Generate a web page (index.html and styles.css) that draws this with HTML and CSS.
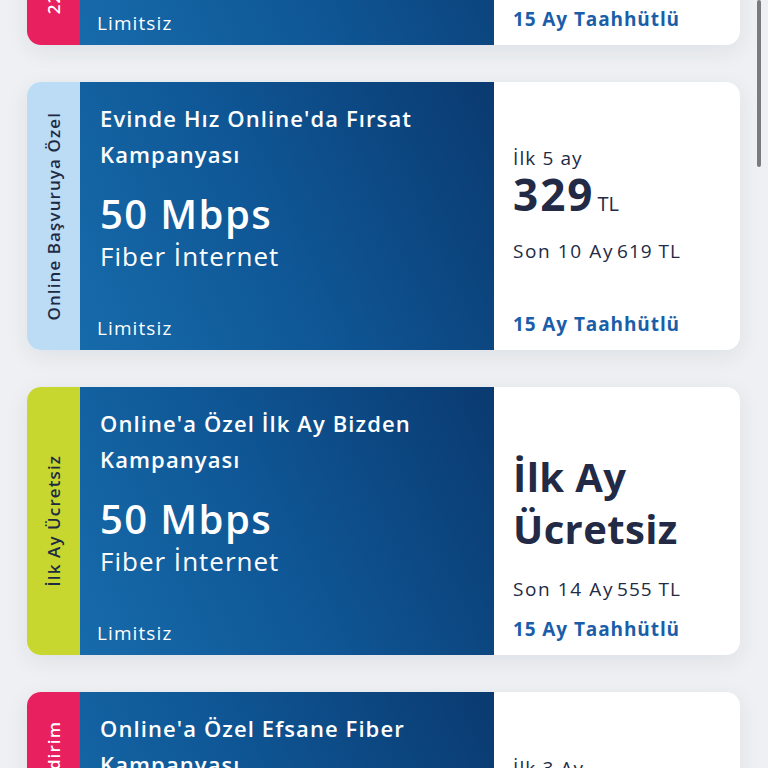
FILE: index.html
```html
<!DOCTYPE html>
<html lang="tr">
<head>
<meta charset="utf-8">
<title>Kampanyalar</title>
<link rel="stylesheet" href="styles.css">
</head>
<body>
<div class="list">
  <div class="card">
    <div class="stripe pink"><span class="stripe-text">22 Ay Boyunca İndirim</span></div>
    <div class="main">
      <div class="title">Online'a Özel Efsane Fiber<br>Kampanyası</div>
      <div class="speed">50 Mbps</div>
      <div class="type">Fiber İnternet</div>
      <div class="limit">Limitsiz</div>
    </div>
    <div class="price">
      <div class="small">İlk 3 Ay</div>
      <div class="big">225<span class="cur">TL</span></div>
      <div class="small rest">Son 12 Ay<span class="num">599 TL</span></div>
      <div class="commit">15 Ay Taahhütlü</div>
    </div>
  </div>

  <div class="card">
    <div class="stripe blue"><span class="stripe-text">Online Başvuruya Özel</span></div>
    <div class="main">
      <div class="title">Evinde Hız Online'da Fırsat<br>Kampanyası</div>
      <div class="speed">50 Mbps</div>
      <div class="type">Fiber İnternet</div>
      <div class="limit">Limitsiz</div>
    </div>
    <div class="price">
      <div class="small">İlk 5 ay</div>
      <div class="big">329<span class="cur">TL</span></div>
      <div class="small rest">Son 10 Ay<span class="num">619 TL</span></div>
      <div class="commit">15 Ay Taahhütlü</div>
    </div>
  </div>

  <div class="card">
    <div class="stripe lime"><span class="stripe-text">İlk Ay Ücretsiz</span></div>
    <div class="main">
      <div class="title">Online'a Özel İlk Ay Bizden<br>Kampanyası</div>
      <div class="speed">50 Mbps</div>
      <div class="type">Fiber İnternet</div>
      <div class="limit">Limitsiz</div>
    </div>
    <div class="price">
      <div class="free">İlk Ay<br>Ücretsiz</div>
      <div class="small rest">Son 14 Ay<span class="num">555 TL</span></div>
      <div class="commit">15 Ay Taahhütlü</div>
    </div>
  </div>

  <div class="card">
    <div class="stripe pink"><span class="stripe-text">Yeni Müşteriye İndirim</span></div>
    <div class="main">
      <div class="title">Online'a Özel Efsane Fiber<br>Kampanyası</div>
      <div class="speed">50 Mbps</div>
      <div class="type">Fiber İnternet</div>
      <div class="limit">Limitsiz</div>
    </div>
    <div class="price">
      <div class="small">İlk 3 Ay</div>
      <div class="big">225<span class="cur">TL</span></div>
      <div class="small rest">Son 12 Ay<span class="num">599 TL</span></div>
      <div class="commit">15 Ay Taahhütlü</div>
    </div>
  </div>
</div>
<div class="scrollbar"></div>
</body>
</html>
```

FILE: styles.css
```css
html, body {
  margin: 0;
  padding: 0;
  height: 768px;
  overflow: hidden;
  background: #eef0f3;
  font-family: "Open Sans", "Noto Sans", sans-serif;
}

.list {
  display: flex;
  flex-direction: column;
  gap: 37px;
  margin-top: -223px;
  padding-left: 27px;
  width: 713px;
}

.card {
  display: flex;
  height: 268px;
  border-radius: 14px;
  overflow: hidden;
  background: #ffffff;
  box-shadow: 0 6px 22px rgba(40, 50, 80, 0.08);
  flex-shrink: 0;
}

.stripe {
  width: 53px;
  flex-shrink: 0;
  display: flex;
  align-items: center;
  justify-content: center;
}
.stripe.pink { background: #e8205f; }
.stripe.blue { background: #bcdcf6; }
.stripe.lime { background: #c8d72f; }

.stripe-text {
  writing-mode: vertical-rl;
  transform: rotate(180deg);
  white-space: nowrap;
  font-size: 17px;
  font-weight: 600;
  letter-spacing: 1.1px;
  color: #1d2a44;
}
.stripe.pink .stripe-text { color: #ffffff; }

.main {
  width: 414px;
  flex-shrink: 0;
  box-sizing: border-box;
  padding: 18px 20px 10px 20px;
  display: flex;
  flex-direction: column;
  color: #ffffff;
  background: linear-gradient(65deg, #176bab 0%, #0f5796 45%, #0a3a70 100%);
}

.title {
  font-size: 22px;
  line-height: 36px;
  font-weight: 600;
  letter-spacing: 1.1px;
}

.speed {
  margin-top: 18px;
  font-size: 40px;
  line-height: 48px;
  font-weight: 600;
  letter-spacing: 1.4px;
}

.type {
  margin-top: 2px;
  font-size: 26px;
  line-height: 32px;
  letter-spacing: 1px;
}

.limit {
  margin-top: auto;
  margin-left: -3px;
  font-size: 19px;
  line-height: 24px;
  letter-spacing: 1.1px;
}

.price {
  flex: 1;
  box-sizing: border-box;
  padding: 64px 12px 14px 19px;
  display: flex;
  flex-direction: column;
  color: #222a45;
}

.small {
  font-size: 19px;
  line-height: 24px;
  letter-spacing: 1.1px;
}

.big {
  margin-top: 1px;
  font-size: 44px;
  line-height: 46px;
  font-weight: 700;
  letter-spacing: 2px;
}

.cur {
  font-size: 20px;
  font-weight: 400;
  margin-left: 3px;
  letter-spacing: 0;
}

.rest {
  margin-top: 12px;
  letter-spacing: 1.6px;
}

.num { margin-left: 3px; letter-spacing: 1px; }

.free {
  font-size: 40px;
  line-height: 52px;
  font-weight: 700;
  letter-spacing: 0.4px;
}

.free + .rest { margin-top: 22px; }

.commit {
  margin-top: auto;
  font-size: 19px;
  line-height: 24px;
  font-weight: 700;
  letter-spacing: 0.9px;
  color: #1a5ea9;
}

.scrollbar {
  position: fixed;
  top: 0;
  left: 757px;
  width: 4px;
  height: 167px;
  border-radius: 2px;
  background: #7b7b7d;
}
```
